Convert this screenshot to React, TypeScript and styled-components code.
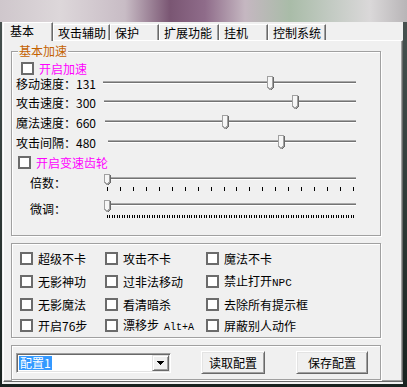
import { FC } from "react";
import styled, { createGlobalStyle } from "styled-components";

const GlobalStyle = createGlobalStyle`
  html, body {
    margin: 0;
    padding: 0;
    background: #1f2b29;
  }
  body {
    font-family: "Noto Sans CJK SC", "Noto Sans", sans-serif;
    font-size: 12px;
    color: #000;
  }
`;

const Screen = styled.div`
  width: 407px;
  height: 387px;
  display: flex;
  flex-direction: column;
  overflow: hidden;
`;

// blurred desktop behind the aero title bar
const GlassStrip = styled.div`
  height: 22px;
  flex: none;
  background: linear-gradient(
    90deg,
    #cfc7cc 0,
    #ddd7da 60px,
    #c8bcc5 125px,
    #7a5673 170px,
    #8f6c8a 205px,
    #c5b7c1 245px,
    #a9bca8 290px,
    #c2cac2 330px,
    #dad8d9 370px,
    #b8b5b7 407px
  );
`;

const Frame = styled.div`
  flex: 1;
  display: flex;
  padding: 0 4px 3px 2px;
  background: linear-gradient(180deg, #46514f, #18221f);
`;

const Window = styled.div`
  flex: 1;
  display: flex;
  flex-direction: column;
  background: #f0f0f0;
  padding: 0 0 2px 1px;
`;

const TabStrip = styled.div`
  display: flex;
  align-items: flex-end;
  height: 18px;
  position: relative;
  z-index: 1;
`;

const Tab = styled.div<{ $active?: boolean; $w: number }>`
  box-sizing: border-box;
  width: ${({ $w }) => $w}px;
  height: ${({ $active }) => ($active ? 19 : 16)}px;
  margin-bottom: ${({ $active }) => ($active ? -1 : 0)}px;
  padding-left: ${({ $active }) => ($active ? 6 : 4)}px;
  line-height: ${({ $active }) => ($active ? 16 : 15)}px;
  background: #f0f0f0;
  border-top: 1px solid #fff;
  border-left: 1px solid #fff;
  border-right: 1px solid #696969;
  box-shadow: inset -1px 0 0 #a0a0a0;
  white-space: nowrap;
`;

const Panel = styled.div`
  flex: 1;
  display: flex;
  flex-direction: column;
  gap: 7px;
  padding: 10px 0 0 7px;
  border: 1px solid;
  border-color: #fff #696969 #696969 #fff;
  box-shadow: inset -1px -1px 0 #a0a0a0;
`;

const Group = styled.div<{ $h: number }>`
  position: relative;
  box-sizing: border-box;
  width: 370px;
  height: ${({ $h }) => $h}px;
  border: 1px solid #a0a0a0;
  box-shadow: inset 1px 1px 0 #fff, 1px 1px 0 #fff;
`;

const Legend = styled.span`
  position: absolute;
  top: -8px;
  left: 6px;
  padding: 0 1px;
  line-height: 14px;
  background: #f0f0f0;
  color: #c46200;
`;

const SpeedBody = styled.div`
  display: flex;
  flex-direction: column;
  padding-top: 10px;
`;

const Row = styled.div<{ $h: number; $pl: number }>`
  display: flex;
  align-items: center;
  height: ${({ $h }) => $h}px;
  padding-left: ${({ $pl }) => $pl}px;
`;

const TickRow = styled.div<{ $h: number }>`
  display: flex;
  height: ${({ $h }) => $h}px;
  padding-left: 4px;
`;

const Box = styled.span`
  box-sizing: border-box;
  width: 13px;
  height: 13px;
  flex: none;
  border: 2px solid #6b6b6b;
  background: #fff;
`;

const CheckText = styled.span<{ $pink?: boolean }>`
  margin-left: 5px;
  line-height: 13px;
  white-space: nowrap;
  color: ${({ $pink }) => ($pink ? "#ff00ff" : "#000")};
`;

const Mono = styled.span<{ $size: number; $gap: number }>`
  font-family: "Liberation Mono", monospace;
  font-size: ${({ $size }) => $size}px;
  margin-left: ${({ $gap }) => $gap}px;
`;

const SliderLabel = styled.span<{ $w: number; $pl?: number; $mt?: number }>`
  box-sizing: border-box;
  width: ${({ $w }) => $w}px;
  flex: none;
  padding-left: ${({ $pl }) => $pl ?? 0}px;
  margin-top: ${({ $mt }) => $mt ?? 0}px;
  line-height: 13px;
  white-space: nowrap;
`;

const SliderCol = styled.div<{ $mt: number }>`
  display: flex;
  flex-direction: column;
  margin-top: ${({ $mt }) => $mt}px;
`;

const Track = styled.div<{ $w: number; $h: number; $rail: number; $inset: number }>`
  position: relative;
  box-sizing: border-box;
  flex: none;
  width: ${({ $w }) => $w}px;
  height: ${({ $h }) => $h}px;
  padding-top: ${({ $rail }) => $rail}px;
  padding-left: ${({ $inset }) => $inset}px;
`;

const Rail = styled.div`
  height: 1px;
  background: #737373;
  border-top: 1px solid #a9a9a9;
  border-bottom: 1px solid #fff;
`;

const ThumbSpot = styled.span`
  position: absolute;
  top: 0;
  display: block;
  line-height: 0;
`;

const Thumb: FC<{ h: number }> = ({ h }) => (
  <svg width="7" height={h} viewBox={`0 0 7 ${h}`} shapeRendering="crispEdges">
    <path d={`M0.5 0.5H5.5V${h - 4}L3 ${h - 1.5}L0.5 ${h - 4}Z`} fill="#f6f6f6" stroke="#a0a0a0" />
    <path d={`M6.5 0.5V${h - 3.5}L3.5 ${h - 0.5}`} fill="none" stroke="#696969" />
  </svg>
);

const Slider: FC<{ w: number; h: number; rail: number; inset?: number; at: number }> = ({
  w,
  h,
  rail,
  inset = 0,
  at,
}) => (
  <Track $w={w} $h={h} $rail={rail} $inset={inset}>
    <Rail />
    <ThumbSpot style={{ left: at }}>
      <Thumb h={h} />
    </ThumbSpot>
  </Track>
);

const Ticks: FC<{ count: number; w: number; from: number; to: number; h: number; mt: number }> = ({
  count,
  w,
  from,
  to,
  h,
  mt,
}) => (
  <svg width={w} height={h} style={{ marginTop: mt, display: "block" }} shapeRendering="crispEdges">
    {Array.from({ length: count }, (_, i) => {
      const x = Math.round(from + ((to - from) * i) / (count - 1));
      return <rect key={i} x={x} y={0} width={1} height={h} fill="#000" />;
    })}
  </svg>
);

const OptionGrid = styled.div`
  display: grid;
  grid-template-columns: 85px 101px 1fr;
  grid-template-rows: 23px 23px 22px 21px;
  padding: 3px 0 0 8px;
`;

const Option = styled.div`
  display: flex;
  align-items: center;
`;

const ConfigBar = styled.div`
  display: flex;
  align-items: center;
  height: 100%;
  padding-left: 4px;
`;

const ComboBox = styled.div`
  box-sizing: border-box;
  display: flex;
  align-items: center;
  width: 155px;
  height: 20px;
  padding: 1px;
  background: #fff;
  border: 1px solid;
  border-color: #a0a0a0 #fff #fff #a0a0a0;
  box-shadow: inset 1px 1px 0 #696969, inset -1px -1px 0 #e3e3e3;
`;

const Selected = styled.span`
  margin-left: 1px;
  padding: 0 1px;
  line-height: 14px;
  background: #3399ff;
  color: #fff;
`;

const DropButton = styled.span`
  box-sizing: border-box;
  display: flex;
  align-items: center;
  justify-content: center;
  width: 17px;
  height: 16px;
  margin-left: auto;
  background: #f0f0f0;
  border: 1px solid;
  border-color: #e3e3e3 #696969 #696969 #e3e3e3;
  box-shadow: inset 1px 1px 0 #fff, inset -1px -1px 0 #a0a0a0;
`;

const Button = styled.button<{ $w: number; $ml: number }>`
  box-sizing: border-box;
  width: ${({ $w }) => $w}px;
  height: 23px;
  margin-left: ${({ $ml }) => $ml}px;
  padding: 0;
  font: inherit;
  color: #000;
  background: #f0f0f0;
  border: 1px solid;
  border-color: #fff #696969 #696969 #fff;
  box-shadow: inset 1px 1px 0 #e3e3e3, inset -1px -1px 0 #a0a0a0;
`;

const tabs = [
  { label: "基本", w: 50, active: true },
  { label: "攻击辅助", w: 57 },
  { label: "保护", w: 49 },
  { label: "扩展功能", w: 60 },
  { label: "挂机", w: 49 },
  { label: "控制系统", w: 58 },
];

const speeds = [
  { label: "移动速度：131", h: 17, start: 103, thumb: 267 },
  { label: "攻击速度：300", h: 21, start: 104, thumb: 292 },
  { label: "魔法速度：660", h: 18, start: 105, thumb: 222 },
  { label: "攻击间隔：480", h: 22, start: 108, thumb: 278 },
];

const options: { label: string; mono?: string; size?: number; gap?: number }[] = [
  { label: "超级不卡" },
  { label: "攻击不卡" },
  { label: "魔法不卡" },
  { label: "无影神功" },
  { label: "过非法移动" },
  { label: "禁止打开", mono: "NPC", size: 11, gap: 0 },
  { label: "无影魔法" },
  { label: "看清暗杀" },
  { label: "去除所有提示框" },
  { label: "开启76步" },
  { label: "漂移步", mono: "Alt+A", size: 10, gap: 5 },
  { label: "屏蔽别人动作" },
];

const RAIL_END = 356;

export default function App() {
  return (
    <>
      <GlobalStyle />
      <Screen>
        <GlassStrip />
        <Frame>
          <Window>
            <TabStrip>
              {tabs.map((t) => (
                <Tab key={t.label} $w={t.w} $active={t.active}>
                  {t.label}
                </Tab>
              ))}
            </TabStrip>
            <Panel>
              <Group $h={185}>
                <Legend>基本加速</Legend>
                <SpeedBody>
                  <Row $h={13} $pl={9}>
                    <Box />
                    <CheckText $pink>开启加速</CheckText>
                  </Row>
                  {speeds.map((s) => (
                    <Row key={s.label} $h={s.h} $pl={4}>
                      <SliderLabel $w={s.start - 16}>{s.label}</SliderLabel>
                      <Slider w={RAIL_END - s.start} h={15} rail={5} at={s.thumb - s.start} />
                    </Row>
                  ))}
                  <Row $h={19} $pl={6}>
                    <Box />
                    <CheckText $pink>开启变速齿轮</CheckText>
                  </Row>
                  <TickRow $h={25}>
                    <SliderLabel $w={88} $pl={14} $mt={4}>
                      倍数：
                    </SliderLabel>
                    <SliderCol $mt={2}>
                      <Slider w={252} h={12} rail={3} inset={3} at={0} />
                      <Ticks count={20} w={252} from={3} to={249} h={4} mt={1} />
                    </SliderCol>
                  </TickRow>
                  <TickRow $h={24}>
                    <SliderLabel $w={88} $pl={14} $mt={5}>
                      微调：
                    </SliderLabel>
                    <SliderCol $mt={3}>
                      <Slider w={252} h={13} rail={3} inset={3} at={0} />
                      <Ticks count={100} w={252} from={3} to={249} h={3} mt={2} />
                    </SliderCol>
                  </TickRow>
                </SpeedBody>
              </Group>

              <Group $h={95}>
                <OptionGrid>
                  {options.map((o) => (
                    <Option key={o.label}>
                      <Box />
                      <CheckText>
                        {o.label}
                        {o.mono && (
                          <Mono $size={o.size ?? 11} $gap={o.gap ?? 0}>
                            {o.mono}
                          </Mono>
                        )}
                      </CheckText>
                    </Option>
                  ))}
                </OptionGrid>
              </Group>

              <Group $h={35}>
                <ConfigBar>
                  <ComboBox>
                    <Selected>配置1</Selected>
                    <DropButton>
                      <svg width="7" height="4" viewBox="0 0 7 4" shapeRendering="crispEdges">
                        <path d="M0 0H7L3.5 4Z" fill="#000" />
                      </svg>
                    </DropButton>
                  </ComboBox>
                  <Button $w={64} $ml={30}>
                    读取配置
                  </Button>
                  <Button $w={72} $ml={31}>
                    保存配置
                  </Button>
                </ConfigBar>
              </Group>
            </Panel>
          </Window>
        </Frame>
      </Screen>
    </>
  );
}
